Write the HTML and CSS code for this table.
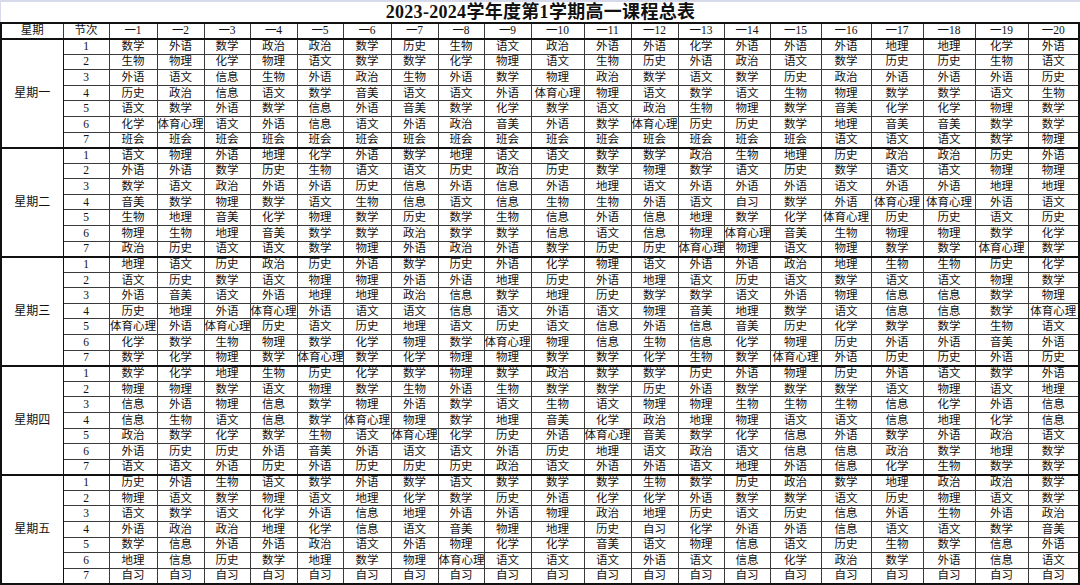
FILE: index.html
```html
<!DOCTYPE html>
<html lang="zh-CN">
<head>
<meta charset="utf-8">
<title>2023-2024学年度第1学期高一课程总表</title>
<link rel="stylesheet" href="styles.css">
</head>
<body>
<div class="sheet">
<div class="title">2023-2024学年度第1学期高一课程总表</div>
<table class="grid">
<colgroup>
<col class="w62"><col class="w46"><col class="w48"><col class="w47"><col class="w46"><col class="w47"><col class="w46"><col class="w48"><col class="w47"><col class="w46"><col class="w47"><col class="w53"><col class="w47"><col class="w47"><col class="w46"><col class="w46"><col class="w51"><col class="w50"><col class="w52"><col class="w52"><col class="w53"><col class="w51">
</colgroup>
<thead>
<tr><th>星期</th><th>节次</th><th>一1</th><th>一2</th><th>一3</th><th>一4</th><th>一5</th><th>一6</th><th>一7</th><th>一8</th><th>一9</th><th>一10</th><th>一11</th><th>一12</th><th>一13</th><th>一14</th><th>一15</th><th>一16</th><th>一17</th><th>一18</th><th>一19</th><th>一20</th></tr>
</thead>
<tbody class="day">
<tr><th class="dayname" rowspan="7">星期一</th><td>1</td><td>数学</td><td>外语</td><td>数学</td><td>政治</td><td>政治</td><td>数学</td><td>历史</td><td>生物</td><td>语文</td><td>政治</td><td>外语</td><td>外语</td><td>化学</td><td>外语</td><td>外语</td><td>外语</td><td>地理</td><td>地理</td><td>化学</td><td>外语</td></tr>
<tr><td>2</td><td>生物</td><td>物理</td><td>化学</td><td>物理</td><td>语文</td><td>数学</td><td>数学</td><td>化学</td><td>物理</td><td>语文</td><td>生物</td><td>历史</td><td>外语</td><td>政治</td><td>语文</td><td>数学</td><td>历史</td><td>历史</td><td>生物</td><td>语文</td></tr>
<tr><td>3</td><td>外语</td><td>语文</td><td>信息</td><td>生物</td><td>外语</td><td>政治</td><td>生物</td><td>外语</td><td>数学</td><td>物理</td><td>政治</td><td>数学</td><td>语文</td><td>数学</td><td>历史</td><td>政治</td><td>外语</td><td>外语</td><td>外语</td><td>历史</td></tr>
<tr><td>4</td><td>历史</td><td>政治</td><td>信息</td><td>语文</td><td>数学</td><td>音美</td><td>语文</td><td>语文</td><td>外语</td><td>体育心理</td><td>物理</td><td>语文</td><td>数学</td><td>语文</td><td>生物</td><td>物理</td><td>数学</td><td>数学</td><td>语文</td><td>生物</td></tr>
<tr><td>5</td><td>语文</td><td>数学</td><td>外语</td><td>数学</td><td>信息</td><td>外语</td><td>音美</td><td>数学</td><td>化学</td><td>数学</td><td>语文</td><td>政治</td><td>生物</td><td>物理</td><td>数学</td><td>音美</td><td>化学</td><td>化学</td><td>物理</td><td>数学</td></tr>
<tr><td>6</td><td>化学</td><td>体育心理</td><td>语文</td><td>外语</td><td>信息</td><td>语文</td><td>外语</td><td>政治</td><td>音美</td><td>外语</td><td>数学</td><td>体育心理</td><td>历史</td><td>历史</td><td>数学</td><td>地理</td><td>音美</td><td>音美</td><td>数学</td><td>数学</td></tr>
<tr><td>7</td><td>班会</td><td>班会</td><td>班会</td><td>班会</td><td>班会</td><td>班会</td><td>班会</td><td>班会</td><td>班会</td><td>班会</td><td>班会</td><td>班会</td><td>班会</td><td>班会</td><td>班会</td><td>语文</td><td>语文</td><td>语文</td><td>数学</td><td>物理</td></tr>
</tbody>
<tbody class="day">
<tr><th class="dayname" rowspan="7">星期二</th><td>1</td><td>语文</td><td>物理</td><td>外语</td><td>地理</td><td>化学</td><td>外语</td><td>数学</td><td>地理</td><td>语文</td><td>语文</td><td>数学</td><td>数学</td><td>政治</td><td>生物</td><td>地理</td><td>历史</td><td>政治</td><td>政治</td><td>历史</td><td>外语</td></tr>
<tr><td>2</td><td>外语</td><td>外语</td><td>数学</td><td>历史</td><td>生物</td><td>语文</td><td>语文</td><td>历史</td><td>政治</td><td>历史</td><td>数学</td><td>物理</td><td>数学</td><td>语文</td><td>历史</td><td>数学</td><td>语文</td><td>语文</td><td>物理</td><td>物理</td></tr>
<tr><td>3</td><td>数学</td><td>语文</td><td>政治</td><td>外语</td><td>外语</td><td>历史</td><td>信息</td><td>外语</td><td>信息</td><td>外语</td><td>地理</td><td>语文</td><td>外语</td><td>外语</td><td>外语</td><td>语文</td><td>外语</td><td>外语</td><td>地理</td><td>地理</td></tr>
<tr><td>4</td><td>音美</td><td>数学</td><td>物理</td><td>数学</td><td>语文</td><td>生物</td><td>信息</td><td>语文</td><td>信息</td><td>生物</td><td>生物</td><td>外语</td><td>语文</td><td>自习</td><td>数学</td><td>外语</td><td>体育心理</td><td>体育心理</td><td>外语</td><td>语文</td></tr>
<tr><td>5</td><td>生物</td><td>地理</td><td>音美</td><td>化学</td><td>物理</td><td>数学</td><td>历史</td><td>数学</td><td>生物</td><td>信息</td><td>外语</td><td>信息</td><td>地理</td><td>数学</td><td>化学</td><td>体育心理</td><td>历史</td><td>历史</td><td>语文</td><td>历史</td></tr>
<tr><td>6</td><td>物理</td><td>生物</td><td>地理</td><td>音美</td><td>数学</td><td>数学</td><td>政治</td><td>数学</td><td>数学</td><td>信息</td><td>语文</td><td>信息</td><td>物理</td><td>体育心理</td><td>音美</td><td>生物</td><td>物理</td><td>物理</td><td>数学</td><td>化学</td></tr>
<tr><td>7</td><td>政治</td><td>历史</td><td>语文</td><td>语文</td><td>数学</td><td>物理</td><td>外语</td><td>政治</td><td>外语</td><td>数学</td><td>历史</td><td>历史</td><td>体育心理</td><td>物理</td><td>语文</td><td>物理</td><td>数学</td><td>数学</td><td>体育心理</td><td>数学</td></tr>
</tbody>
<tbody class="day">
<tr><th class="dayname" rowspan="7">星期三</th><td>1</td><td>地理</td><td>语文</td><td>历史</td><td>政治</td><td>历史</td><td>外语</td><td>数学</td><td>历史</td><td>外语</td><td>化学</td><td>物理</td><td>语文</td><td>外语</td><td>外语</td><td>政治</td><td>地理</td><td>生物</td><td>生物</td><td>历史</td><td>化学</td></tr>
<tr><td>2</td><td>语文</td><td>历史</td><td>数学</td><td>语文</td><td>物理</td><td>物理</td><td>外语</td><td>外语</td><td>地理</td><td>历史</td><td>外语</td><td>地理</td><td>语文</td><td>历史</td><td>语文</td><td>数学</td><td>语文</td><td>语文</td><td>物理</td><td>数学</td></tr>
<tr><td>3</td><td>外语</td><td>音美</td><td>语文</td><td>外语</td><td>地理</td><td>地理</td><td>政治</td><td>信息</td><td>数学</td><td>地理</td><td>历史</td><td>数学</td><td>数学</td><td>语文</td><td>外语</td><td>物理</td><td>信息</td><td>信息</td><td>数学</td><td>物理</td></tr>
<tr><td>4</td><td>历史</td><td>地理</td><td>外语</td><td>体育心理</td><td>外语</td><td>语文</td><td>语文</td><td>信息</td><td>语文</td><td>外语</td><td>语文</td><td>物理</td><td>音美</td><td>地理</td><td>数学</td><td>语文</td><td>信息</td><td>信息</td><td>数学</td><td>体育心理</td></tr>
<tr><td>5</td><td>体育心理</td><td>外语</td><td>体育心理</td><td>历史</td><td>语文</td><td>历史</td><td>地理</td><td>语文</td><td>历史</td><td>语文</td><td>信息</td><td>外语</td><td>信息</td><td>音美</td><td>历史</td><td>化学</td><td>数学</td><td>数学</td><td>生物</td><td>语文</td></tr>
<tr><td>6</td><td>化学</td><td>数学</td><td>生物</td><td>物理</td><td>数学</td><td>化学</td><td>物理</td><td>数学</td><td>体育心理</td><td>物理</td><td>信息</td><td>生物</td><td>信息</td><td>化学</td><td>物理</td><td>历史</td><td>外语</td><td>外语</td><td>音美</td><td>外语</td></tr>
<tr><td>7</td><td>数学</td><td>化学</td><td>物理</td><td>数学</td><td>体育心理</td><td>数学</td><td>化学</td><td>物理</td><td>物理</td><td>数学</td><td>数学</td><td>化学</td><td>生物</td><td>数学</td><td>体育心理</td><td>外语</td><td>历史</td><td>历史</td><td>外语</td><td>历史</td></tr>
</tbody>
<tbody class="day">
<tr><th class="dayname" rowspan="7">星期四</th><td>1</td><td>数学</td><td>化学</td><td>地理</td><td>生物</td><td>历史</td><td>化学</td><td>数学</td><td>物理</td><td>数学</td><td>政治</td><td>数学</td><td>数学</td><td>历史</td><td>外语</td><td>物理</td><td>历史</td><td>外语</td><td>语文</td><td>数学</td><td>外语</td></tr>
<tr><td>2</td><td>物理</td><td>物理</td><td>数学</td><td>语文</td><td>物理</td><td>数学</td><td>生物</td><td>外语</td><td>生物</td><td>数学</td><td>数学</td><td>历史</td><td>外语</td><td>数学</td><td>数学</td><td>数学</td><td>语文</td><td>物理</td><td>语文</td><td>地理</td></tr>
<tr><td>3</td><td>信息</td><td>外语</td><td>物理</td><td>信息</td><td>数学</td><td>物理</td><td>外语</td><td>数学</td><td>语文</td><td>生物</td><td>语文</td><td>物理</td><td>物理</td><td>生物</td><td>生物</td><td>生物</td><td>信息</td><td>化学</td><td>外语</td><td>信息</td></tr>
<tr><td>4</td><td>信息</td><td>生物</td><td>语文</td><td>信息</td><td>数学</td><td>体育心理</td><td>物理</td><td>数学</td><td>地理</td><td>音美</td><td>化学</td><td>政治</td><td>地理</td><td>物理</td><td>语文</td><td>语文</td><td>信息</td><td>地理</td><td>化学</td><td>信息</td></tr>
<tr><td>5</td><td>政治</td><td>数学</td><td>化学</td><td>数学</td><td>生物</td><td>语文</td><td>体育心理</td><td>化学</td><td>历史</td><td>外语</td><td>体育心理</td><td>音美</td><td>数学</td><td>化学</td><td>信息</td><td>外语</td><td>数学</td><td>外语</td><td>政治</td><td>语文</td></tr>
<tr><td>6</td><td>外语</td><td>历史</td><td>历史</td><td>外语</td><td>音美</td><td>外语</td><td>语文</td><td>语文</td><td>外语</td><td>历史</td><td>地理</td><td>语文</td><td>政治</td><td>语文</td><td>信息</td><td>信息</td><td>政治</td><td>数学</td><td>地理</td><td>数学</td></tr>
<tr><td>7</td><td>语文</td><td>语文</td><td>外语</td><td>历史</td><td>外语</td><td>历史</td><td>历史</td><td>历史</td><td>政治</td><td>语文</td><td>外语</td><td>外语</td><td>语文</td><td>地理</td><td>外语</td><td>信息</td><td>化学</td><td>生物</td><td>数学</td><td>数学</td></tr>
</tbody>
<tbody class="day">
<tr><th class="dayname" rowspan="7">星期五</th><td>1</td><td>历史</td><td>外语</td><td>生物</td><td>语文</td><td>数学</td><td>外语</td><td>数学</td><td>语文</td><td>数学</td><td>数学</td><td>数学</td><td>生物</td><td>数学</td><td>历史</td><td>政治</td><td>数学</td><td>地理</td><td>政治</td><td>政治</td><td>数学</td></tr>
<tr><td>2</td><td>物理</td><td>语文</td><td>数学</td><td>物理</td><td>语文</td><td>地理</td><td>化学</td><td>数学</td><td>历史</td><td>外语</td><td>化学</td><td>化学</td><td>外语</td><td>数学</td><td>数学</td><td>语文</td><td>历史</td><td>物理</td><td>语文</td><td>数学</td></tr>
<tr><td>3</td><td>语文</td><td>数学</td><td>语文</td><td>化学</td><td>外语</td><td>信息</td><td>地理</td><td>外语</td><td>外语</td><td>物理</td><td>政治</td><td>地理</td><td>历史</td><td>语文</td><td>历史</td><td>信息</td><td>外语</td><td>生物</td><td>外语</td><td>政治</td></tr>
<tr><td>4</td><td>外语</td><td>政治</td><td>政治</td><td>地理</td><td>化学</td><td>信息</td><td>语文</td><td>音美</td><td>物理</td><td>地理</td><td>历史</td><td>自习</td><td>化学</td><td>外语</td><td>外语</td><td>信息</td><td>语文</td><td>语文</td><td>数学</td><td>音美</td></tr>
<tr><td>5</td><td>数学</td><td>信息</td><td>外语</td><td>外语</td><td>政治</td><td>语文</td><td>外语</td><td>物理</td><td>化学</td><td>化学</td><td>音美</td><td>语文</td><td>物理</td><td>信息</td><td>语文</td><td>历史</td><td>生物</td><td>数学</td><td>信息</td><td>外语</td></tr>
<tr><td>6</td><td>地理</td><td>信息</td><td>历史</td><td>数学</td><td>地理</td><td>数学</td><td>物理</td><td>体育心理</td><td>语文</td><td>语文</td><td>语文</td><td>外语</td><td>语文</td><td>信息</td><td>化学</td><td>政治</td><td>数学</td><td>外语</td><td>信息</td><td>语文</td></tr>
<tr><td>7</td><td>自习</td><td>自习</td><td>自习</td><td>自习</td><td>自习</td><td>自习</td><td>自习</td><td>自习</td><td>自习</td><td>自习</td><td>自习</td><td>自习</td><td>自习</td><td>自习</td><td>自习</td><td>自习</td><td>自习</td><td>自习</td><td>自习</td><td>自习</td></tr>
</tbody>
</table>
</div>
</body>
</html>
```

FILE: styles.css
```css
* {
  box-sizing: border-box;
}

html,
body {
  margin: 0;
  padding: 0;
  background: #ffffff;
}

body {
  width: 1080px;
  height: 585px;
  overflow: hidden;
  color: #111111;
  font-family: "Liberation Serif", "Noto Sans CJK SC", serif;
}

.sheet {
  width: 1080px;
  height: 585px;
}

.title {
  height: 22px;
  border-top: 2px solid #d6daea;
  border-left: 1px solid #d6daea;
  text-align: center;
  font-size: 18px;
  line-height: 20px;
  font-weight: bold;
  letter-spacing: 0.3px;
  color: #111111;
}

.grid {
  width: 1078px;
  table-layout: fixed;
  border-collapse: collapse;
  border: 2px solid #111111;
  font-size: 11.5px;
}

.grid th,
.grid td {
  height: 15.58px;
  padding: 0;
  border: 1px solid #3a3a3a;
  text-align: center;
  vertical-align: middle;
  line-height: 13px;
  font-weight: normal;
  white-space: nowrap;
  overflow: hidden;
}

.grid thead th {
  border-bottom: 1.5px solid #111111;
}

.grid .day {
  border-top: 2px solid #111111;
}

.grid .dayname {
  border-right: 1.5px solid #111111;
  font-size: 12px;
}

.w46 { width: 46px; }
.w47 { width: 47px; }
.w48 { width: 48px; }
.w50 { width: 50px; }
.w51 { width: 51px; }
.w52 { width: 52px; }
.w53 { width: 53px; }
.w62 { width: 62px; }
```
